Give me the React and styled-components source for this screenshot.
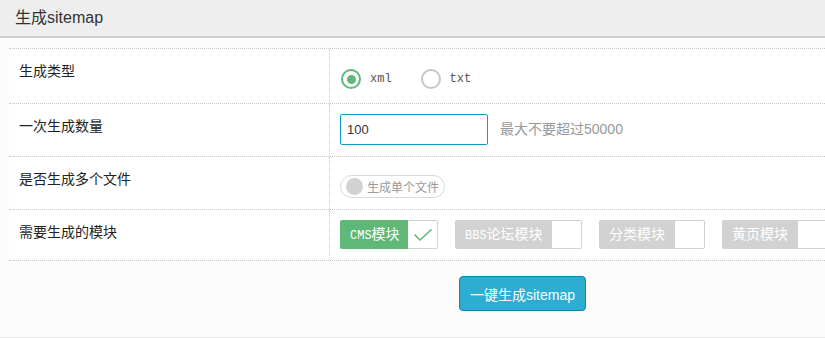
import React from "react";
import styled, { createGlobalStyle } from "styled-components";

const Global = createGlobalStyle`
  html, body { margin: 0; padding: 0; background: #fff; }
  body { font-family: "Liberation Sans", "Noto Sans CJK SC", sans-serif; color: #333; }
  * { box-sizing: border-box; }
`;

const Page = styled.div`
  width: 825px;
  height: 339px;
  overflow: hidden;
`;

const Header = styled.div`
  height: 38px;
  background: #eeeeee;
  border-bottom: 2px solid #cfcfcf;
  padding-left: 15px;
  font-size: 16px;
  line-height: 35px;
  color: #333;
`;

const Body = styled.div`
  background: #fcfcfc;
  padding: 10px 0 26px 9px;
  border-bottom: 1px solid #e8e8e8;
`;

const Table = styled.div`
  background: #fff;
  border-bottom: 1px dotted #c8c8c8;
`;

const Row = styled.div`
  display: grid;
  grid-template-columns: 320px 1fr;
  height: ${(p) => p.$h}px;
  border-top: 1px dotted #c8c8c8;
`;

const Label = styled.div`
  padding: 12px 0 0 10px;
  font-size: 14px;
  line-height: 20px;
  color: #222;
`;

const Cell = styled.div`
  border-left: 1px dotted #c8c8c8;
  padding: ${(p) => p.$pt}px 0 0 10px;
  display: flex;
  align-items: flex-start;
  white-space: nowrap;
  overflow: hidden;
`;

const RadioItem = styled.label`
  display: flex;
  align-items: center;
  height: 20px;
  margin-right: 28px;
  font-family: "Liberation Mono", monospace;
  font-size: 12px;
  color: #555;
`;

const RadioRing = styled.span`
  width: 20px;
  height: 20px;
  border-radius: 50%;
  border: 2px solid ${(p) => (p.$on ? "#5fb878" : "#c6c6c6")};
  display: flex;
  align-items: center;
  justify-content: center;
  margin: 0 9px 0 1px;
  &::after {
    content: "";
    width: 9px;
    height: 9px;
    border-radius: 50%;
    background: #5fb878;
    display: ${(p) => (p.$on ? "block" : "none")};
  }
`;

const Input = styled.input`
  width: 148px;
  height: 31px;
  border: 1px solid #109ec7;
  border-radius: 2px;
  padding: 0 6px;
  font-family: "Liberation Sans", sans-serif;
  font-size: 13px;
  color: #333;
  outline: none;
`;

const Hint = styled.span`
  margin-left: 12px;
  font-size: 14px;
  line-height: 31px;
  color: #999;
`;

const Switch = styled.span`
  position: relative;
  display: inline-flex;
  align-items: center;
  height: 23px;
  width: 105px;
  border: 1px solid #d9d9d9;
  border-radius: 12px;
  background: #fff;
  padding-left: 26px;
  font-size: 12px;
  color: #999;
`;

const Knob = styled.i`
  position: absolute;
  left: 5px;
  top: 2px;
  width: 17px;
  height: 17px;
  border-radius: 50%;
  background: #d2d2d2;
`;

const Checks = styled.div`
  display: flex;
  gap: 17px;
`;

const Check = styled.span`
  display: flex;
  height: 29px;
  flex: none;
`;

const CheckText = styled.span`
  width: ${(p) => p.$w}px;
  padding-left: 10px;
  background: ${(p) => (p.$on ? "#5fb878" : "#d2d2d2")};
  color: #fff;
  font-size: 14px;
  line-height: 29px;
  border-radius: 2px 0 0 2px;
  overflow: hidden;
`;

const Latin = styled.span`
  font-family: "Liberation Mono", monospace;
  font-size: 12px;
`;

const CheckBox = styled.span`
  width: 30px;
  height: 29px;
  border: 1px solid #d2d2d2;
  border-left: none;
  border-radius: 0 2px 2px 0;
  background: #fff;
  display: flex;
  align-items: center;
  justify-content: center;
`;

const Footer = styled.div`
  padding: 15px 0 0 450px;
`;

const Button = styled.button`
  height: 35px;
  padding: 0 10px;
  background: #2dadd2;
  border: 1px solid #0b87ab;
  border-radius: 4px;
  color: #fff;
  font-family: "Liberation Sans", "Noto Sans CJK SC", sans-serif;
  font-size: 14px;
  cursor: pointer;
`;

const modules = [
  { latin: "CMS", cjk: "模块", w: 68, on: true },
  { latin: "BBS", cjk: "论坛模块", w: 97 },
  { latin: "", cjk: "分类模块", w: 76 },
  { latin: "", cjk: "黄页模块", w: 76 },
];

export default function App() {
  return (
    <Page>
      <Global />
      <Header>生成sitemap</Header>
      <Body>
        <Table>
          <Row $h={55}>
            <Label>生成类型</Label>
            <Cell $pt={20}>
              <RadioItem>
                <RadioRing $on />
                xml
              </RadioItem>
              <RadioItem>
                <RadioRing />
                txt
              </RadioItem>
            </Cell>
          </Row>
          <Row $h={53}>
            <Label>一次生成数量</Label>
            <Cell $pt={10}>
              <Input defaultValue="100" />
              <Hint>最大不要超过50000</Hint>
            </Cell>
          </Row>
          <Row $h={53}>
            <Label>是否生成多个文件</Label>
            <Cell $pt={18}>
              <Switch>
                <Knob />
                生成单个文件
              </Switch>
            </Cell>
          </Row>
          <Row $h={51}>
            <Label>需要生成的模块</Label>
            <Cell $pt={10}>
              <Checks>
                {modules.map((m) => (
                  <Check key={m.cjk + m.latin}>
                    <CheckText $w={m.w} $on={m.on}>
                      {m.latin && <Latin>{m.latin}</Latin>}
                      {m.cjk}
                    </CheckText>
                    <CheckBox>
                      {m.on && (
                        <svg width="20" height="14" viewBox="0 0 20 14">
                          <polyline
                            points="1.5,6.5 7,12 18.5,1.5"
                            fill="none"
                            stroke="#5fb878"
                            strokeWidth="1.6"
                          />
                        </svg>
                      )}
                    </CheckBox>
                  </Check>
                ))}
              </Checks>
            </Cell>
          </Row>
        </Table>
        <Footer>
          <Button>一键生成sitemap</Button>
        </Footer>
      </Body>
    </Page>
  );
}
